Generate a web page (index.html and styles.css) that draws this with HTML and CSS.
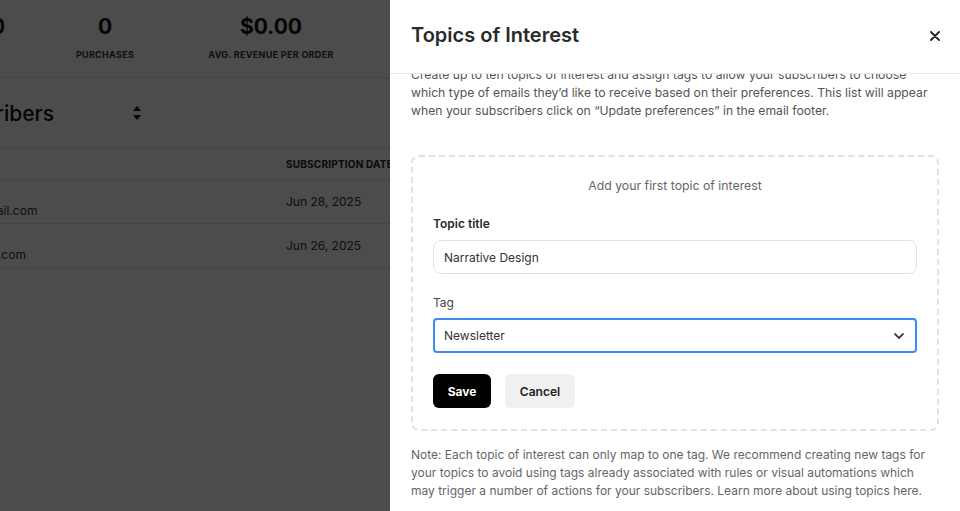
FILE: index.html
```html
<!DOCTYPE html>
<html lang="en">
<head>
  <meta charset="UTF-8">
  <meta name="viewport" content="width=device-width, initial-scale=1.0">
  <title>Subscribers</title>
  <link rel="stylesheet" href="styles.css">
</head>
<body>

  <main class="page">
    <section class="stats">
      <div class="stat stat-first">
        <div class="stat-value">0</div>
      </div>
      <div class="stat stat-mid">
        <div class="stat-value">0</div>
        <div class="stat-label">Purchases</div>
      </div>
      <div class="stat stat-wide">
        <div class="stat-value">$0.00</div>
        <div class="stat-label">Avg. revenue per order</div>
      </div>
    </section>

    <section class="list-head">
      <h2>Subscribers</h2>
      <span class="sort">
        <svg width="8" height="14" viewBox="0 0 8 14"><path d="M4 0L8 5H0z M4 14L0 9H8z" fill="#1c1c1c"/></svg>
      </span>
    </section>

    <table class="subs">
      <thead>
        <tr><th class="col-email">Email</th><th>Subscription date</th></tr>
      </thead>
      <tbody>
        <tr><td class="col-email"><span class="email">writer.lee@gmail.com</span></td><td>Jun 28, 2025</td></tr>
        <tr><td class="col-email"><span class="email">ann@storyhub.com</span></td><td>Jun 26, 2025</td></tr>
      </tbody>
    </table>
  </main>

  <div class="overlay"></div>

  <aside class="drawer">
    <header class="drawer-head">
      <h1>Topics of Interest</h1>
      <button class="close" aria-label="Close">
        <svg width="10" height="10" viewBox="0 0 10 10"><path d="M1 1L9 9M9 1L1 9" stroke="#222" stroke-width="1.8" stroke-linecap="round"/></svg>
      </button>
    </header>

    <div class="drawer-body">
      <p class="intro">Create up to ten topics of interest and assign tags to allow your subscribers to choose which type of emails they’d like to receive based on their preferences. This list will appear when your subscribers click on “Update preferences” in the email footer.</p>

      <div class="topic-box">
        <p class="topic-hint">Add your first topic of interest</p>

        <label class="field-label strong">Topic title</label>
        <input class="text-input" type="text" value="Narrative Design">

        <label class="field-label tag-label">Tag</label>
        <div class="select">
          <span>Newsletter</span>
          <svg width="12" height="8" viewBox="0 0 12 8"><path d="M2 2L6 6L10 2" fill="none" stroke="#444" stroke-width="1.8" stroke-linecap="round" stroke-linejoin="round"/></svg>
        </div>

        <div class="actions">
          <button class="btn btn-save">Save</button>
          <button class="btn btn-cancel">Cancel</button>
        </div>
      </div>

      <p class="note">Note: Each topic of interest can only map to one tag. We recommend creating new tags for your topics to avoid using tags already associated with rules or visual automations which may trigger a number of actions for your subscribers. Learn more about using topics here.</p>
    </div>
  </aside>

</body>
</html>
```

FILE: styles.css
```css
body {
margin: 0;
font-family: Inter, "Noto Sans", sans-serif;
color: #222;
background-color: #fff;
overflow: hidden;
height: 511px;
}

/* page behind the drawer */
.page {
margin-left: -67px;
width: 900px;
}

.stats {
display: flex;
padding-top: 14px;
border-bottom: 1px solid #e4e4e4;
height: 63px;
margin-left: 15px;
}

.stat {
text-align: center;
}

.stat-first { width: 100px; }
.stat-mid { width: 114px; }
.stat-wide { width: 218px; }

.stat-value {
font-size: 21px;
font-weight: 700;
line-height: 25px;
color: #111;
}

.stat-label {
margin-top: 10px;
font-size: 9px;
font-weight: 700;
text-transform: uppercase;
letter-spacing: 0.3px;
color: #333;
}

.list-head {
display: flex;
align-items: center;
height: 70px;
border-bottom: 1px solid #e4e4e4;
}

.list-head h2 {
margin: 0;
font-size: 21px;
font-weight: 500;
color: #111;
}

.sort {
margin-left: 79px;
display: flex;
}

.subs {
border-collapse: collapse;
width: 800px;
}

.subs th {
text-align: left;
font-size: 10px;
font-weight: 700;
text-transform: uppercase;
color: #222;
height: 30px;
padding: 0;
border-bottom: 1px solid #e4e4e4;
letter-spacing: 0.2px;
}

.subs td {
height: 29px;
padding: 14px 0 0;
vertical-align: top;
font-size: 12px;
line-height: 16px;
color: #333;
border-bottom: 1px solid #e4e4e4;
}

.subs .col-email {
width: 353px;
}

.subs .email {
display: block;
margin-top: 9px;
margin-left: -18px;
}

.overlay {
position: fixed;
inset: 0;
background: rgba(0, 0, 0, 0.7);
}

/* slide-over drawer */
.drawer {
position: fixed;
top: 0;
right: 0;
bottom: 0;
width: 570px;
background: #fff;
border-top-left-radius: 6px;
display: flex;
flex-direction: column;
}

.drawer-head {
position: relative;
z-index: 1;
background: #fff;
height: 73px;
flex-shrink: 0;
display: flex;
align-items: center;
justify-content: space-between;
padding: 0 19px 0 21px;
border-bottom: 1px solid #e8e8e8;
}

.drawer-head h1 {
margin: 0 0 3px;
font-size: 20px;
font-weight: 600;
color: #2a2a2a;
}

.close {
background: none;
border: none;
padding: 0;
margin-bottom: 2px;
width: 12px;
height: 12px;
display: flex;
align-items: center;
justify-content: center;
cursor: pointer;
}

.drawer-body {
overflow: hidden;
padding: 0 21px;
font-size: 12px;
line-height: 18px;
}

.intro {
margin: -8px 0 0;
font-size: 12.2px;
color: #555;
}

.topic-box {
margin-top: 35px;
border: 2px dashed #e2e2e2;
border-radius: 8px;
padding: 20px 20px 21px;
}

.topic-hint {
margin: 0;
text-align: center;
font-size: 12.3px;
color: #666;
}

.field-label {
display: block;
margin-top: 20px;
margin-bottom: 7px;
color: #444;
}

.field-label.strong {
font-weight: 600;
color: #2a2a2a;
}

.field-label.tag-label {
margin-bottom: 6px;
}

.text-input {
box-sizing: border-box;
display: block;
width: 100%;
height: 34px;
padding: 0 10px;
border: 1px solid #e2e2e2;
border-radius: 8px;
font-family: inherit;
font-size: 12px;
color: #333;
outline: none;
}

.select {
box-sizing: border-box;
height: 35px;
display: flex;
align-items: center;
justify-content: space-between;
padding: 0 10px 0 9px;
border: 2px solid #3b8af0;
border-radius: 4px;
color: #333;
}

.actions {
display: flex;
gap: 14px;
margin-top: 21px;
}

.btn {
height: 34px;
border: none;
border-radius: 6px;
font-family: inherit;
font-size: 12px;
font-weight: 700;
cursor: pointer;
}

.btn-save {
width: 58px;
background: #000;
color: #fff;
}

.btn-cancel {
width: 70px;
background: #f0f0f0;
color: #222;
font-weight: 600;
}

.note {
margin: 15px 0 0;
font-size: 12px;
color: #666;
}
```
